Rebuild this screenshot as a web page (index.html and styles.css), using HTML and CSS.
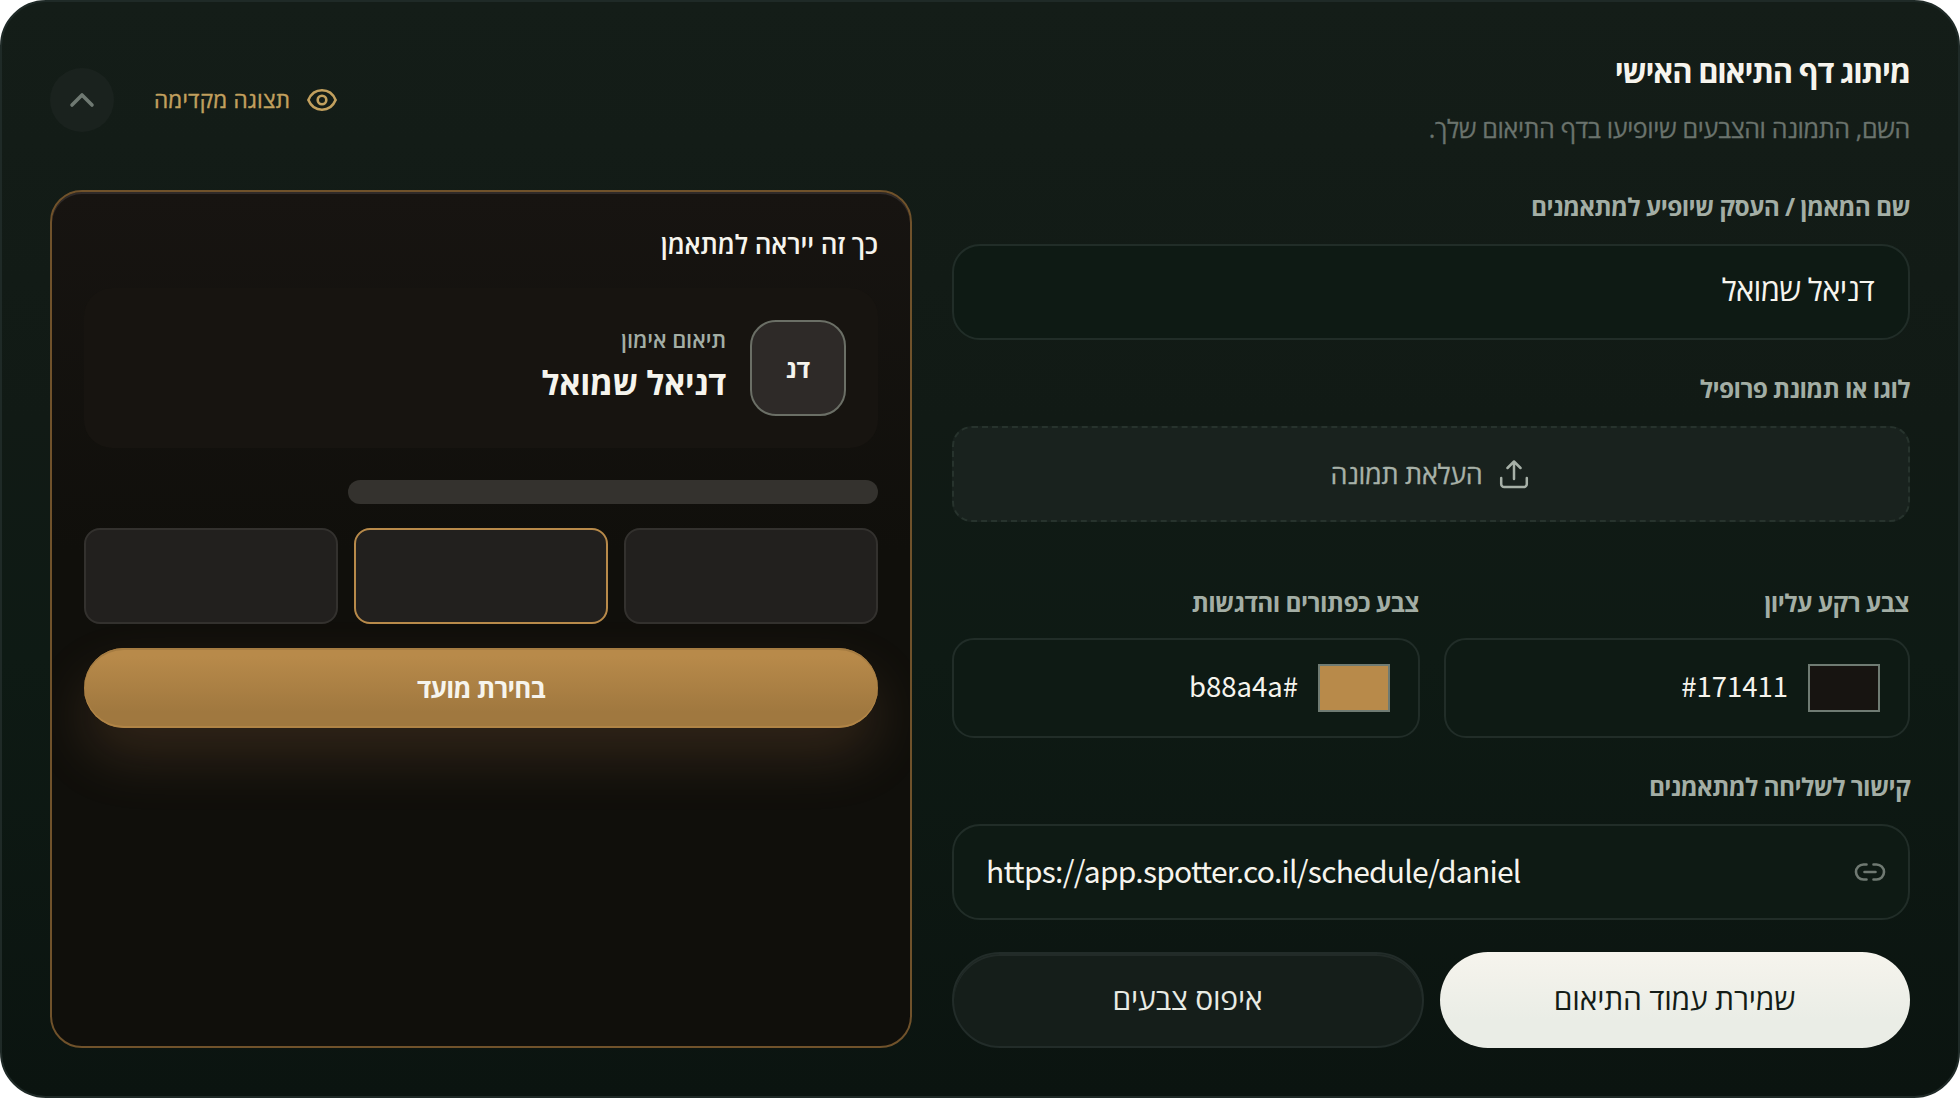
FILE: index.html
```
<!DOCTYPE html>
<html lang="he" dir="rtl">
<head>
<meta charset="utf-8">
<title>מיתוג דף התיאום האישי</title>
<link rel="stylesheet" href="styles.css">
</head>
<body>
<main class="card">
  <header class="head">
    <div class="head-text">
      <h1 class="title">מיתוג דף התיאום האישי</h1>
      <p class="subtitle">השם, התמונה והצבעים שיופיעו בדף התיאום שלך.</p>
    </div>
    <div class="head-actions">
      <a class="preview-link">
        <svg width="32" height="24" viewBox="0 0 32 24" fill="none" stroke="currentColor" stroke-width="2.6"><path d="M2.4 12C5 5.800 10 2.300 16 2.300S27 5.800 29.600 12C27 18.200 22 21.700 16 21.700S5 18.200 2.400 12Z"/><circle cx="16" cy="12" r="4.300"/></svg>
        <span>תצוגה מקדימה</span>
      </a>
      <button class="toggle" aria-label="סגירה"><svg width="28" height="20" viewBox="0 0 28 20" fill="none" stroke="currentColor" stroke-width="3.6" stroke-linecap="round" stroke-linejoin="round"><path d="M4 15 14 5 24 15"/></svg></button>
    </div>
  </header>
  <div class="body">
    <form class="form">
      <label class="label">שם המאמן / העסק שיופיע למתאמנים</label>
      <div class="field name-field"><span class="value">דניאל שמואל</span></div>
      <label class="label">לוגו או תמונת פרופיל</label>
      <div class="upload">
        <svg width="30" height="30" viewBox="0 0 30 30" fill="none" stroke="currentColor" stroke-width="2.500" stroke-linecap="round" stroke-linejoin="round"><path d="M15 20V2.500M8.500 9 15 2.500 21.500 9M2.200 19v6a3 3 0 0 0 3 3h19.600a3 3 0 0 0 3-3v-6"/></svg>
        <span>העלאת תמונה</span>
      </div>
      <div class="colors">
        <div class="color">
          <label class="label">צבע רקע עליון</label>
          <div class="color-box"><i class="swatch dark"></i><span class="hex" dir="ltr">#171411</span></div>
        </div>
        <div class="color">
          <label class="label">צבע כפתורים והדגשות</label>
          <div class="color-box"><i class="swatch gold"></i><span class="hex" dir="ltr">b88a4a#</span></div>
        </div>
      </div>
      <label class="label">קישור לשליחה למתאמנים</label>
      <div class="field link-field">
        <svg width="32" height="20" viewBox="0 0 32 20" fill="none" stroke="currentColor" stroke-width="2.600" stroke-linecap="round"><path d="M12.500 2.500h-3a7.500 7.500 0 0 0 0 15h3M19.500 2.500h3a7.500 7.500 0 0 1 0 15h-3M10.500 10h11"/></svg>
        <span class="url" dir="ltr">https://app.spotter.co.il/schedule/daniel</span>
      </div>
      <div class="buttons">
        <button type="button" class="btn primary">שמירת עמוד התיאום</button>
        <button type="button" class="btn ghost">איפוס צבעים</button>
      </div>
    </form>
    <section class="preview">
      <h2 class="preview-title">כך זה ייראה למתאמן</h2>
      <div class="coach">
        <div class="avatar">דנ</div>
        <div class="coach-text">
          <span class="coach-kicker">תיאום אימון</span>
          <strong class="coach-name">דניאל שמואל</strong>
        </div>
      </div>
      <div class="bar"></div>
      <div class="slots"><i class="slot"></i><i class="slot active"></i><i class="slot"></i></div>
      <div class="cta">בחירת מועד</div>
    </section>
  </div>
</main>
</body>
</html>
```
FILE: styles.css
```
* { box-sizing: border-box; margin: 0; padding: 0; }
body {
  width: 1960px; height: 1098px; background: #fff; overflow: hidden;
  font-family: "Open Sans", "Noto Sans Hebrew", sans-serif; color: #f6f4ed;
}
button { font: inherit; border: 0; }
svg { display: block; flex: none; }
.card {
  width: 1960px; height: 1098px; padding: 48px; border: 2px solid #1f2a27; border-radius: 46px;
  background: linear-gradient(180deg, #141d18 0%, #111a15 38%, #0e1a14 60%, #0b1410 100%);
}
.head { height: 140px; display: flex; justify-content: space-between; }
.title { padding-top: 1px; font-size: 31px; line-height: 40px; font-weight: 700; white-space: nowrap; letter-spacing: -1.2px; }
.subtitle { margin-top: 17px; font-size: 25px; line-height: 40px; color: #6a736d; white-space: nowrap; letter-spacing: -.33px; -webkit-text-stroke: .3px currentColor; }
.head-actions { display: flex; gap: 40px; height: 64px; margin-top: 18px; align-items: center; }
.preview-link { display: flex; align-items: center; gap: 16px; font-size: 22.500px; line-height: 40px; font-weight: 500; color: #c2a05e; white-space: nowrap; -webkit-text-stroke: .4px currentColor; letter-spacing: .2px; }
.toggle { width: 64px; height: 64px; border-radius: 50%; background: #1a221e; color: #6f7972; display: flex; align-items: center; justify-content: center; }
.body { display: grid; grid-template-columns: 958px 862px; column-gap: 40px; height: 858px; }
.label { display: block; height: 54px; line-height: 34px; font-size: 24.500px; font-weight: 700; color: #a3aea5; white-space: nowrap; letter-spacing: -.62px; }
.colors .label { line-height: 37px; padding-right: 1px; letter-spacing: -.58px; }
.field { height: 96px; border: 2px solid #212d28; border-radius: 28px; background: #0e1a14; display: flex; align-items: center; }
.name-field { padding: 0 34px 7px 0; margin-bottom: 32px; font-size: 31px; letter-spacing: -.7px; }
.upload {
  height: 96px; border: 2px dashed #27332d; border-radius: 20px; background: #19221e; color: #a7b1a8;
  display: flex; align-items: center; justify-content: center; gap: 16px; font-size: 27px; letter-spacing: -.3px; margin-bottom: 62px;
  padding: 0 3px 1px 0; -webkit-text-stroke: .3px currentColor;
}
.colors { display: grid; grid-template-columns: 466px 468px; gap: 24px; margin-bottom: 32px; }
.color-box { height: 100px; border: 2px solid #212d28; border-radius: 22px; background: #0e1a14; display: flex; align-items: center; padding-right: 28px; gap: 20px; }
.swatch { width: 72px; height: 48px; border: 2px solid #6f7b73; }
.swatch.dark { background: #171411; }
.swatch.gold { background: #b88a4a; }
.hex, .url { font-family: "Noto Sans CJK JP", sans-serif; }
.hex { font-size: 27.500px; line-height: 40px; padding-bottom: 6px; }
.link-field { justify-content: space-between; padding: 0 22px 0 32px; color: #6f7972; }
.url { font-size: 30px; line-height: 40px; padding-bottom: 4px; letter-spacing: -.75px; color: #f6f4ed; }
.buttons { display: grid; grid-template-columns: 470px 472px; gap: 16px; margin-top: 32px; }
.btn { height: 96px; border-radius: 48px; font-size: 30px; line-height: 40px; letter-spacing: -.2px; padding: 0 1px 2px 0; }
.primary { background: linear-gradient(180deg, #f6f4ed, #eaede6 70%); color: #131c17; }
.ghost { background: #151e1a; border: 2px solid #222c29; box-shadow: inset 0 2px 0 #222b28; color: #e8ebe4; }
.preview {
  height: 858px; padding: 32px; border: 2px solid #70522b; border-radius: 32px; overflow: hidden;
  background: linear-gradient(180deg, #171411 0%, #100f0b 42%, #100f0b 100%);
  box-shadow: inset 0 2px 0 #2f2a29;
}
.preview-title { height: 64px; line-height: 40px; font-size: 26px; font-weight: 600; white-space: nowrap; letter-spacing: -.1px; }
.coach { height: 160px; border-radius: 28px; background: #171410; padding: 0 32px; display: flex; align-items: center; gap: 24px; }
.avatar { width: 96px; height: 96px; border-radius: 26px; border: 2px solid #6b6f66; background: #2e2a28; display: flex; align-items: center; justify-content: center; font-weight: 700; font-size: 25px; }
.coach-text { display: flex; flex-direction: column; padding-bottom: 3px; }
.coach-kicker { font-size: 22px; line-height: 32px; color: #a3aea5; font-weight: 600; letter-spacing: -.1px; }
.coach-name { font-size: 33px; line-height: 56px; font-weight: 700; letter-spacing: -.3px; }
.bar { width: 530px; height: 24px; border-radius: 12px; background: #34322e; margin: 32px 0 24px; }
.slots { display: grid; grid-template-columns: repeat(3, 1fr); gap: 16px; margin-bottom: 24px; }
.slot { height: 96px; border-radius: 16px; border: 2px solid #33312e; background: #22201e; }
.slot.active { border-color: #b88a4a; }
.cta {
  height: 80px; border-radius: 40px; display: flex; align-items: center; justify-content: center;
  font-size: 26px; font-weight: 700; letter-spacing: -.7px;
  background: linear-gradient(180deg, #b88a4a 10%, #a0783f 80%);
  box-shadow: inset 0 2px 0 #a57c42, inset 0 -2px 0 #b08446, 0 28px 56px rgba(184, 126, 80, .2);
}
```
